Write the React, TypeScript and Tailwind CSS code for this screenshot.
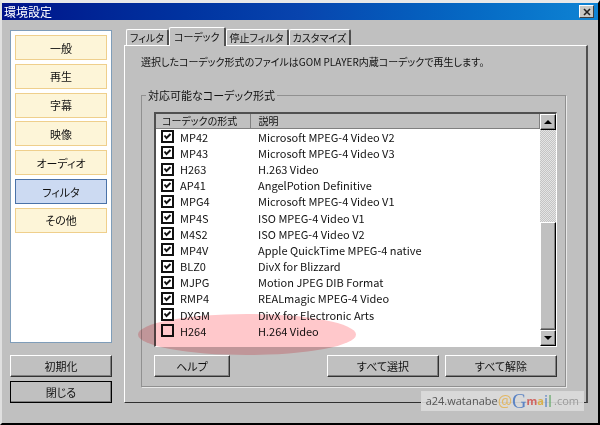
import { useState, type ReactNode } from 'react';
import clsx from 'clsx';

const categories = ['一般', '再生', '字幕', '映像', 'オーディオ', 'フィルタ', 'その他'];

const tabs = ['フィルタ', 'コーデック', '停止フィルタ', 'カスタマイズ'];

const codecs = [
  { id: 'MP42', name: 'Microsoft MPEG-4 Video V2', enabled: true },
  { id: 'MP43', name: 'Microsoft MPEG-4 Video V3', enabled: true },
  { id: 'H263', name: 'H.263 Video', enabled: true },
  { id: 'AP41', name: 'AngelPotion Definitive', enabled: true },
  { id: 'MPG4', name: 'Microsoft MPEG-4 Video V1', enabled: true },
  { id: 'MP4S', name: 'ISO MPEG-4 Video V1', enabled: true },
  { id: 'M4S2', name: 'ISO MPEG-4 Video V2', enabled: true },
  { id: 'MP4V', name: 'Apple QuickTime MPEG-4 native', enabled: true },
  { id: 'BLZ0', name: 'DivX for Blizzard', enabled: true },
  { id: 'MJPG', name: 'Motion JPEG DIB Format', enabled: true },
  { id: 'RMP4', name: 'REALmagic MPEG-4 Video', enabled: true },
  { id: 'DXGM', name: 'DivX for Electronic Arts', enabled: true },
  { id: 'H264', name: 'H.264 Video', enabled: false },
];

function DialogButton({ children, className }: { children: ReactNode; className?: string }) {
  return (
    <button
      type="button"
      className={clsx(
        'flex h-[22px] items-center justify-center border border-t-white border-r-[#333] border-b-[#333] border-l-white bg-[#c0c0c0] shadow-[inset_-1px_-1px_0_#808080]',
        className
      )}
    >
      {children}
    </button>
  );
}

function TitleBar() {
  return (
    <header className="flex h-[17px] items-center justify-between bg-linear-to-r from-[#00128a] via-[#0844ae] to-[#0f84d4] pr-1 pl-0.5">
      <h1 className="text-xs text-white">環境設定</h1>
      <button
        type="button"
        aria-label="閉じる"
        className="flex h-[13px] w-[15px] items-center justify-center border border-t-white border-r-[#404040] border-b-[#404040] border-l-white bg-[#c8c8c4]"
      >
        <svg viewBox="0 0 8 8" className="size-2" stroke="#222" strokeWidth="1.6">
          <path d="M1 1l6 6M7 1L1 7" />
        </svg>
      </button>
    </header>
  );
}

function Sidebar() {
  const [active, setActive] = useState('フィルタ');

  return (
    <aside className="flex w-[102px] shrink-0 flex-col gap-1">
      <nav className="mb-2 flex-1 border border-[#7f9db9] bg-white p-1">
        <div className="flex h-[198px] flex-col justify-between">
          {categories.map((name) => (
            <button
              key={name}
              type="button"
              onClick={() => setActive(name)}
              className={clsx(
                'flex h-[25px] items-center justify-center border',
                name === active ? 'border-[#4a72a8] bg-[#ccdaf2]' : 'border-[#efcf8c] bg-[#fdf5d8]'
              )}
            >
              {name}
            </button>
          ))}
        </div>
      </nav>
      <DialogButton>初期化</DialogButton>
      <DialogButton className="outline -outline-offset-1 outline-black">閉じる</DialogButton>
    </aside>
  );
}

function CodecRow({ id, name, enabled }: { id: string; name: string; enabled: boolean }) {
  return (
    <tr>
      <td className="w-[94px] p-0 pl-[5px]">
        <div className="flex items-center gap-1.5">
          <span className="grid size-[13px] *:col-start-1 *:row-start-1">
            <input
              id={id}
              type="checkbox"
              defaultChecked={enabled}
              className="peer size-[13px] appearance-none border-2 border-[#111]"
            />
            <svg
              viewBox="0 0 13 13"
              className="pointer-events-none invisible size-[13px] peer-checked:visible"
              fill="none"
              stroke="#111"
              strokeWidth="2"
            >
              <path d="M3.5 5.5l2 2.5L9.5 4" />
            </svg>
          </span>
          <label htmlFor={id}>{id}</label>
        </div>
      </td>
      <td className="p-0 pl-2">{name}</td>
    </tr>
  );
}

function ScrollBar() {
  const button =
    'flex h-4 w-full shrink-0 items-center justify-center border border-t-white border-r-black border-b-black border-l-white bg-[#c0c0c0] shadow-[inset_-1px_-1px_0_#808080]';

  return (
    <div className="flex w-4 shrink-0 flex-col bg-[#d4d4d4]">
      <button type="button" aria-label="上へ" className={button}>
        <svg viewBox="0 0 8 4" className="h-1 w-2">
          <path d="M4 0l4 4H0z" />
        </svg>
      </button>
      <div className="flex-1 bg-[repeating-conic-gradient(#c4c4c4_0_25%,#e4e4e4_0_50%)] bg-size-[2px_2px]" />
      <div className="h-[108px] border border-t-white border-r-black border-b-[#505050] border-l-white bg-[#c0c0c0] shadow-[inset_-1px_-1px_0_#808080]" />
      <button type="button" aria-label="下へ" className={button}>
        <svg viewBox="0 0 8 4" className="h-1 w-2">
          <path d="M0 0h8L4 4z" />
        </svg>
      </button>
    </div>
  );
}

function CodecList() {
  return (
    <div className="relative">
      <div className="flex h-[235px] border-t-2 border-r border-b border-l-2 border-t-[#505050] border-r-white border-b-white border-l-[#505050] bg-white">
        <div className="min-w-0 flex-1">
          <table className="h-[225px] w-full border-collapse text-left leading-3">
            <thead>
              <tr className="h-[14px] bg-[#c0c0c0] text-[10px]">
                <th className="w-[94px] border-r border-b border-[#808080] p-0 pl-1.5 font-normal">コーデックの形式</th>
                <th className="border-r border-b border-[#808080] p-0 pl-2 font-normal">説明</th>
              </tr>
            </thead>
            <tbody>
              {codecs.map((codec) => (
                <CodecRow key={codec.id} {...codec} />
              ))}
            </tbody>
          </table>
        </div>
        <ScrollBar />
      </div>
      {/* highlight over the H264 row */}
      <div className="pointer-events-none absolute -bottom-2 -left-4 h-[41px] w-[218px] rounded-[50%] bg-[#ffc8cb] mix-blend-multiply" />
    </div>
  );
}

function Tabs() {
  const [active, setActive] = useState('コーデック');

  return (
    <div role="tablist" className="flex items-end pl-0.5 text-[10px]">
      {tabs.map((name) => (
        <button
          key={name}
          type="button"
          role="tab"
          aria-selected={name === active}
          onClick={() => setActive(name)}
          className={clsx(
            'rounded-t-xs border-t border-r-2 border-l border-t-white border-r-[#505050] border-l-white whitespace-nowrap',
            name === active ? 'relative -mb-px h-[19px] bg-[#c0c0c0] px-1' : 'h-4 px-[3px]'
          )}
        >
          {name}
        </button>
      ))}
    </div>
  );
}

function Watermark() {
  return (
    <div className="absolute right-3.5 bottom-3 flex h-5 items-center border border-[#d8d8d8] bg-[#dcdcdc]/90 px-1 font-['Open_Sans',sans-serif] text-[11px] text-[#555]">
      <span>a24.watanabe</span>
      <span className="text-base text-[#e2b866]">@</span>
      <span className="font-['Liberation_Serif',serif] text-xl text-[#5c84c4]">G</span>
      <span className="font-bold text-[#d06460]">m</span>
      <span className="font-bold text-[#d8b04c]">a</span>
      <span className="text-base text-[#5c84c4]">i</span>
      <span className="text-base text-[#6cac70]">l</span>
      <span className="pl-0.5 text-[#999]">.com</span>
    </div>
  );
}

export default function App() {
  return (
    <div className="relative flex min-h-screen flex-col border-t-[3px] border-r-2 border-b-2 border-l-2 border-t-[#e8e8e8] border-r-black border-b-black border-l-[#e0e0e0] bg-[#c0c0c0] font-['Noto_Sans_CJK_JP',sans-serif] text-[11px] leading-4 text-[#111] [font-feature-settings:'palt']">
      <TitleBar />
      <div className="flex flex-1 gap-3 pt-[7px] pr-2.5 pb-5 pl-2">
        <div className="flex pt-[3px]">
          <Sidebar />
        </div>
        <main className="flex min-w-0 flex-1 flex-col">
          <Tabs />
          <section className="flex-1 border-t border-r-2 border-b border-l border-t-white border-r-[#505050] border-b-[#303030] border-l-white px-4 pt-2 pb-3.5">
            <p className="text-[10px]">選択したコーデック形式のファイルはGOM PLAYER内蔵コーデックで再生します。</p>
            <fieldset className="mt-[17px] mr-1 border border-[#909090] px-2 pt-[9px] pb-[9px] pl-3 shadow-[1px_1px_0_#e8e8e8]">
              <legend className="-ml-2 px-0.5">対応可能なコーデック形式</legend>
              <CodecList />
              <div className="mt-2 flex gap-1.5">
                <DialogButton className="mr-auto w-[76px]">ヘルプ</DialogButton>
                <DialogButton className="w-28">すべて選択</DialogButton>
                <DialogButton className="w-28">すべて解除</DialogButton>
              </div>
            </fieldset>
          </section>
        </main>
      </div>
      <Watermark />
    </div>
  );
}
